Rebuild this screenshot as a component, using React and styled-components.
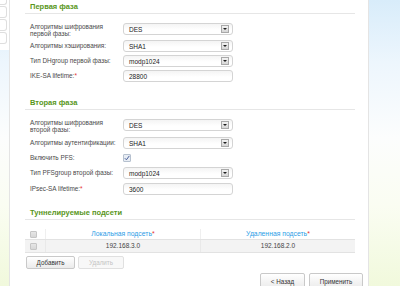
import React from "react";
import styled, { createGlobalStyle } from "styled-components";

const GlobalStyle = createGlobalStyle`
  html, body { margin: 0; padding: 0; }
  body {
    font-family: "Liberation Sans", Arial, sans-serif;
    overflow: hidden;
  }
`;

const Page = styled.div`
  display: flex;
  height: 286px;
  overflow: hidden;
  background: linear-gradient(180deg, #d8ecfa 0%, #edf6fd 22%, #fcfdfd 48%, #fafdf2 72%, #f1f9dc 100%);
`;

const Sidebar = styled.div`
  width: 9px;
  flex-shrink: 0;
`;

const Menu = styled.div`
  background: #fff;
  height: 50px;
  display: flex;
  flex-direction: column;
  gap: 1px;
`;

const MenuItem = styled.div`
  width: 7px;
  height: ${(p) => (p.$cut ? "5px" : "12px")};
  box-sizing: border-box;
  border: 1px solid #dedede;
  border-left: none;
  border-top: ${(p) => (p.$cut ? "none" : "1px solid #dedede")};
  border-radius: ${(p) => (p.$cut ? "0 0 3px 0" : "0 3px 3px 0")};
  background: #fff;
`;

const Panel = styled.div`
  width: 360px;
  flex-shrink: 0;
  box-sizing: border-box;
  background: #fff;
  border-left: 1px solid #e4e4e4;
  border-right: 1px solid #e4e4e4;
  padding: 0 13px 0 15px;
`;

const Section = styled.section`
  margin-top: ${(p) => p.$top || 0}px;
`;

const Heading = styled.h2`
  margin: 0;
  height: 13px;
  line-height: 13px;
  padding-left: 5px;
  border-bottom: 1px solid #e6e6e6;
  font-size: 7.5px;
  font-weight: bold;
  color: #58961a;
`;

const Fields = styled.div`
  margin-top: 9px;
  display: flex;
  flex-direction: column;
  gap: ${(p) => p.$gap || 3}px;
`;

const Row = styled.div`
  display: flex;
  align-items: flex-start;
`;

const Label = styled.div`
  width: 98px;
  flex-shrink: 0;
  box-sizing: border-box;
  padding-left: 5px;
  padding-top: ${(p) => (p.$multi ? "1px" : "0")};
  font-size: 6.4px;
  white-space: nowrap;
  color: #4a4a4a;
  line-height: ${(p) => (p.$multi ? "6.5px" : p.$h ? `${p.$h}px` : "12px")};
`;

const Req = styled.span`
  color: #e53030;
`;

const SelectBox = styled.div`
  width: 110px;
  height: 12px;
  box-sizing: border-box;
  border: 1px solid #d4d4d4;
  border-radius: 3px;
  background: linear-gradient(180deg, #f4f4f4 0%, #fff 60%);
  display: flex;
  align-items: center;
  justify-content: space-between;
  padding: 0 3px 0 5px;
  font-size: 6.5px;
  color: #222;
`;

const ArrowBox = styled.span`
  width: 8px;
  height: 8px;
  box-sizing: border-box;
  border: 1px solid #a9a9a9;
  background: linear-gradient(180deg, #f3f3f3, #d6d6d6);
  display: flex;
  align-items: center;
  justify-content: center;

  &::after {
    content: "";
    border-left: 2px solid transparent;
    border-right: 2px solid transparent;
    border-top: 2px solid #1e1e1e;
  }
`;

const TextInput = styled.input`
  width: 110px;
  height: 12px;
  box-sizing: border-box;
  border: 1px solid #d4d4d4;
  border-radius: 3px;
  background: linear-gradient(180deg, #f4f4f4 0%, #fff 60%);
  padding: 0 0 0 5px;
  margin: 0;
  font-family: inherit;
  font-size: 6.5px;
  color: #222;
  outline: none;
`;

const Check = styled.span`
  display: flex;
  align-items: center;
  justify-content: center;
  width: ${(p) => p.$size || 8}px;
  height: ${(p) => p.$size || 8}px;
  box-sizing: border-box;
  border: 1px solid ${(p) => (p.$checked ? "#b6c1cf" : "#c6c6c6")};
  border-radius: 1px;
  background: ${(p) => (p.$checked ? "#e8edf4" : "linear-gradient(180deg, #e6e6e6, #d7d7d7)")};
  margin-top: ${(p) => (p.$checked ? "1px" : "0")};
`;

const Table = styled.table`
  width: 100%;
  margin-top: 9px;
  border-collapse: collapse;
  line-height: 1;
`;

const Th = styled.th`
  height: 10px;
  padding: 0;
  font-size: 6.8px;
  font-weight: normal;
  color: #2d9de6;
  text-align: ${(p) => (p.$box ? "left" : "center")};
  padding-left: ${(p) => (p.$box ? "5px" : "0")};
  width: ${(p) => (p.$box ? "15px" : "auto")};
  border-bottom: 1px solid #e2e2e2;
  border-left: ${(p) => (p.$box ? "none" : "1px solid #efefef")};
`;

const Td = styled.td`
  height: 12px;
  padding: 0;
  font-size: 6.5px;
  background: #f3f3f3;
  color: #444;
  text-align: ${(p) => (p.$box ? "left" : "center")};
  padding-left: ${(p) => (p.$box ? "5px" : "0")};
  border-bottom: 1px solid #e2e2e2;
  border-left: ${(p) => (p.$box ? "none" : "1px solid #e9e9e9")};
`;

const Actions = styled.div`
  margin-top: 3px;
  display: flex;
  gap: 3px;
  padding-left: 1px;
`;

const Button = styled.button`
  height: ${(p) => p.$h || 13}px;
  width: ${(p) => p.$w}px;
  box-sizing: border-box;
  padding: 0;
  border: 1px solid ${(p) => (p.disabled ? "#e0e0e0" : "#c9c9c9")};
  border-radius: 2px;
  background: ${(p) => (p.disabled ? "#f8f8f8" : "linear-gradient(180deg, #ffffff, #ebebeb)")};
  color: ${(p) => (p.disabled ? "#c4c4c4" : "#333")};
  font-family: inherit;
  font-size: 6.3px;
  cursor: pointer;
`;

const Footer = styled.div`
  margin-top: 4px;
  margin-right: -8px;
  display: flex;
  justify-content: flex-end;
  gap: 4px;
`;

const Select = ({ value }) => (
  <SelectBox>
    <span>{value}</span>
    <ArrowBox />
  </SelectBox>
);

const CheckMark = () => (
  <svg width="6" height="6" viewBox="0 0 6 6">
    <path d="M0.8 3.2 L2.4 4.8 L5.3 0.9" fill="none" stroke="#4a5f99" strokeWidth="1" />
  </svg>
);

export default function App() {
  return (
    <>
      <GlobalStyle />
      <Page>
        <Sidebar>
          <Menu>
            <MenuItem $cut />
            <MenuItem />
            <MenuItem />
            <MenuItem />
          </Menu>
        </Sidebar>
        <Panel>
          <Section>
            <Heading>Первая фаза</Heading>
            <Fields>
              <Row>
                <Label $multi>
                  Алгоритмы шифрования
                  <br />
                  первой фазы:
                </Label>
                <Select value="DES" />
              </Row>
              <Row>
                <Label>Алгоритмы хэширования:</Label>
                <Select value="SHA1" />
              </Row>
              <Row>
                <Label>Тип DHgroup первой фазы:</Label>
                <Select value="modp1024" />
              </Row>
              <Row>
                <Label>
                  IKE-SA lifetime:<Req>*</Req>
                </Label>
                <TextInput readOnly value="28800" />
              </Row>
            </Fields>
          </Section>

          <Section $top={14}>
            <Heading>Вторая фаза</Heading>
            <Fields $gap={4}>
              <Row>
                <Label $multi>
                  Алгоритмы шифрования
                  <br />
                  второй фазы:
                </Label>
                <Select value="DES" />
              </Row>
              <Row>
                <Label>Алгоритмы аутентификации:</Label>
                <Select value="SHA1" />
              </Row>
              <Row>
                <Label $h={10}>Включить PFS:</Label>
                <Check $checked>
                  <CheckMark />
                </Check>
              </Row>
              <Row>
                <Label>Тип PFSgroup второй фазы:</Label>
                <Select value="modp1024" />
              </Row>
              <Row>
                <Label>
                  IPsec-SA lifetime:<Req>*</Req>
                </Label>
                <TextInput readOnly value="3600" />
              </Row>
            </Fields>
          </Section>

          <Section $top={11}>
            <Heading>Туннелируемые подсети</Heading>
            <Table>
              <thead>
                <tr>
                  <Th $box>
                    <Check $size={7} />
                  </Th>
                  <Th>
                    Локальная подсеть<Req>*</Req>
                  </Th>
                  <Th>
                    Удаленная подсеть<Req>*</Req>
                  </Th>
                </tr>
              </thead>
              <tbody>
                <tr>
                  <Td $box>
                    <Check $size={7} />
                  </Td>
                  <Td>192.168.3.0</Td>
                  <Td>192.168.2.0</Td>
                </tr>
              </tbody>
            </Table>
            <Actions>
              <Button $w={49}>Добавить</Button>
              <Button $w={46} disabled>
                Удалить
              </Button>
            </Actions>
          </Section>

          <Footer>
            <Button $w={45} $h={16}>
              &lt; Назад
            </Button>
            <Button $w={54} $h={16}>
              Применить
            </Button>
          </Footer>
        </Panel>
      </Page>
    </>
  );
}
